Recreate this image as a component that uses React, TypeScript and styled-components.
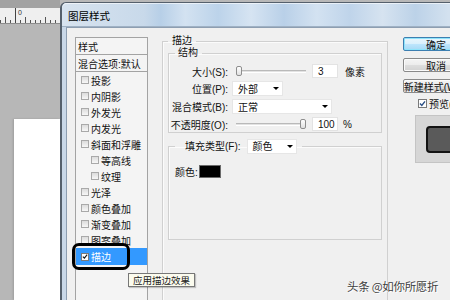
import React from "react";
import styled, { createGlobalStyle } from "styled-components";

const Global = createGlobalStyle`
  html, body { margin: 0; padding: 0; width: 450px; height: 300px; overflow: hidden; background: #b8b8b8; }
  body { font-family: "Liberation Sans", "Noto Sans CJK SC", sans-serif; font-size: 10px; color: #111; }
  * { box-sizing: border-box; }
`;

const Screen = styled.div`
  position: relative;
  display: flex;
  width: 450px;
  height: 300px;
  overflow: hidden;
`;

/* ---------- Photoshop workspace on the left ---------- */
const Workspace = styled.div`
  width: 60px;
  flex: none;
  display: flex;
  flex-direction: column;
  background: #b7b7b7;
`;
const TopStrip = styled.div`
  height: 8px;
  background: #a2a2a2;
`;
const Ruler = styled.div`
  height: 16px;
  padding: 1px 0 0 18px;
  font-size: 7px;
  line-height: 8px;
  color: #333;
  border-bottom: 1px solid #8c8c8c;
  background:
    linear-gradient(#444, #444) 15px 0 / 1px 100% no-repeat,
    repeating-linear-gradient(to right, #555 0 1px, transparent 1px 5px) 0 100% / 100% 3px no-repeat,
    repeating-linear-gradient(to right, #555 0 1px, transparent 1px 20px) 5px 100% / 100% 6px no-repeat,
    #efefef;
`;
const WorkArea = styled.div`
  flex: 1;
  display: flex;
  padding: 95px 0 0 14px;
`;
const Canvas = styled.div`
  flex: 1;
  background: #ffffff;
  box-shadow: -1px 0 2px rgba(0, 0, 0, 0.15);
`;

/* ---------- Dialog ---------- */
const Dialog = styled.div`
  flex: 1;
  margin-top: 2px;
  display: flex;
  flex-direction: column;
  border-left: 2px solid #55606c;
  border-top: 1px solid #55606c;
  border-top-left-radius: 6px;
  background: #c9d8e8;
`;
const TitleBar = styled.div`
  height: 24px;
  flex: none;
  display: flex;
  align-items: center;
  padding-left: 6px;
  font-size: 10.5px;
  color: #000;
  border-top-left-radius: 5px;
  background: linear-gradient(
    to right,
    #d7e3ef 0,
    #c8d9ea 20%,
    #b7cfe7 24%,
    #d3e2f1 30%,
    #bcd3ea 38%,
    #d6e4f2 46%,
    #b9d0e8 54%,
    #d3e2f1 62%,
    #bfd4ea 70%,
    #d6e3f0 78%,
    #bcd2e8 86%,
    #d3e1ef 94%
  );
  box-shadow: inset 0 1px 0 rgba(255, 255, 255, 0.6), inset 0 -1px 0 #9fb1c4;
`;
const Body = styled.div`
  flex: 1;
  min-height: 0;
  overflow: hidden;
  margin-left: 4px;
  display: flex;
  align-items: flex-start;
  padding: 7px 0 0 8px;
  background: #f0f0f0;
  border-left: 1px solid #8d9eb1;
  border-top: 1px solid #8d9eb1;
`;

/* ---------- Styles list ---------- */
const ListBox = styled.div`
  position: relative;
  width: 73px;
  flex: none;
  margin-top: 2px;
  align-self: stretch;
  border: 1px solid #a3a3a3;
  border-bottom: none;
  background: #f4f4f4;
`;
const ListHead = styled.div`
  height: 17px;
  display: flex;
  align-items: center;
  padding-left: 2px;
  border-bottom: 1px solid #a3a3a3;
  white-space: nowrap;
  color: #111;
`;
const ListItem = styled.div<{ $indent?: boolean; $selected?: boolean }>`
  height: ${(p) => (p.$selected ? 17 : 16)}px;
  display: flex;
  align-items: center;
  gap: 2px;
  padding-left: ${(p) => (p.$indent ? 15 : 5)}px;
  white-space: nowrap;
  background: ${(p) => (p.$selected ? "#3399ff" : "transparent")};
  color: ${(p) => (p.$selected ? "#ffffff" : "#111")};
`;
const Box = styled.span<{ $checked?: boolean; $size?: number }>`
  width: ${(p) => p.$size ?? 8}px;
  height: ${(p) => p.$size ?? 8}px;
  flex: none;
  display: inline-flex;
  align-items: center;
  justify-content: center;
  border: 1px solid ${(p) => (p.$checked ? "#7a7a7a" : "#a9a9a9")};
  background: ${(p) => (p.$checked ? "#ffffff" : "linear-gradient(#dcdcdc, #f7f7f7)")};
`;
const Annotation = styled.div`
  position: absolute;
  left: -4px;
  top: 205px;
  width: 58px;
  height: 27px;
  border: 3px solid #000;
  border-radius: 7px;
`;
const Tooltip = styled.div`
  position: absolute;
  left: 128px;
  top: 273px;
  height: 14px;
  padding: 0 4px;
  display: flex;
  align-items: center;
  font-size: 9.5px;
  color: #222;
  background: #fbfbee;
  border: 1px solid #777;
  box-shadow: 1px 1px 1px rgba(0, 0, 0, 0.2);
  white-space: nowrap;
`;

/* ---------- Main panel ---------- */
const Group = styled.fieldset<{ $outer?: boolean }>`
  margin: 0;
  border: 1px solid #d0d0d0;
  box-shadow: inset 1px 1px 0 #fbfbfb;
  padding: ${(p) => (p.$outer ? "0 5px 0 5px" : "0 2px 0 2px")};
  min-width: 0;
`;
const Outer = styled(Group)`
  width: 226px;
  height: 280px;
  flex: none;
  margin-left: 14px;
`;
const Legend = styled.legend<{ $pad?: number }>`
  line-height: 12px;
  padding: 0 4px 0 ${(p) => p.$pad ?? 4}px;
  margin-left: ${(p) => (p.$pad ? 4 : 0)}px;
  color: #111;
`;
const FillLegend = styled(Legend)`
  display: flex;
  align-items: center;
  gap: 6px;
  line-height: 15px;
  padding-right: 5px;
`;
const Structure = styled(Group)`
  padding-bottom: 1px;
`;
const Rows = styled.div`
  display: grid;
  grid-template-columns: 57px 1fr;
  column-gap: 4px;
  row-gap: 3px;
  padding-top: 5px;
`;
const Label = styled.div<{ $h: number }>`
  height: ${(p) => p.$h}px;
  display: flex;
  align-items: center;
  justify-content: flex-end;
  white-space: nowrap;
  color: #111;
`;
const Controls = styled.div<{ $h: number }>`
  height: ${(p) => p.$h}px;
  display: flex;
  align-items: center;
`;
const SliderTrack = styled.div`
  position: relative;
  width: 70px;
  height: 3px;
  margin-left: 4px;
  border-top: 1px solid #b9b9b9;
  border-bottom: 1px solid #ffffff;
  background: #e2e2e2;
`;
const Thumb = styled.span<{ $pos: number }>`
  position: absolute;
  top: -5px;
  left: ${(p) => p.$pos * 64}px;
  width: 6px;
  height: 10px;
  border: 1px solid #8e8e8e;
  border-radius: 2px;
  background: linear-gradient(#ffffff, #e0e0e0);
`;
const NumInput = styled.div`
  width: 26px;
  height: 14px;
  margin-left: 6px;
  padding-left: 5px;
  display: flex;
  align-items: center;
  background: #fff;
  border: 1px solid #e3e3e3;
  color: #111;
`;
const Unit = styled.span<{ $gap: number }>`
  margin-left: ${(p) => p.$gap}px;
  color: #111;
  white-space: nowrap;
`;
const Select = styled.div<{ $w: number }>`
  width: ${(p) => p.$w}px;
  height: 15px;
  display: flex;
  align-items: center;
  justify-content: space-between;
  padding: 0 3px 0 5px;
  background: #fff;
  border: 1px solid #e6e6e6;
  color: #111;
`;
const Arrow = styled.span`
  width: 0;
  height: 0;
  border-left: 3px solid transparent;
  border-right: 3px solid transparent;
  border-top: 3px solid #000;
`;
const Fill = styled(Group)`
  margin-top: 6px;
  height: 101px;
`;
const ColorRow = styled.div`
  display: flex;
  align-items: center;
  gap: 1px;
  padding: 10px 0 0 4px;
  color: #111;
`;
const Swatch = styled.span`
  width: 22px;
  height: 13px;
  background: #000;
  border: 1px solid #6a6a6a;
`;

/* ---------- Right column ---------- */
const RightCol = styled.div`
  flex: none;
  width: 70px;
  margin: 2px 0 0 15px;
  display: flex;
  flex-direction: column;
  gap: 7px;
`;
const Button = styled.div<{ $default?: boolean }>`
  width: 66px;
  height: 14px;
  display: flex;
  align-items: center;
  justify-content: center;
  white-space: nowrap;
  color: #111;
  border-radius: 2px;
  border: 1px solid ${(p) => (p.$default ? "#3c7fb1" : "#8a8a8a")};
  background: ${(p) =>
    p.$default
      ? "linear-gradient(#eaf6fd, #d9f0fc 50%, #bee6fd 50%, #a7d9f5)"
      : "linear-gradient(#f4f4f4, #ececec 50%, #dedede 50%, #d2d2d2)"};
  box-shadow: ${(p) => (p.$default ? "inset 0 0 0 1px #8fe4fb" : "inset 0 0 0 1px #fbfbfb")};
`;
const PreviewCheck = styled.div`
  display: flex;
  align-items: center;
  gap: 2px;
  padding-left: 15px;
  margin-top: -2px;
  height: 10px;
  white-space: nowrap;
  color: #111;
`;
const PreviewBox = styled.div`
  margin: 0 0 0 12px;
  width: 60px;
  height: 48px;
  padding: 10px 0 0 10px;
  background: #d6d6d6;
  border: 1px solid #c4c4c4;
`;
const PreviewSwatch = styled.div`
  width: 50px;
  height: 27px;
  background: #5a5a5a;
  border: 2px solid #121212;
  border-radius: 4px;
`;

const Watermark = styled.div`
  position: absolute;
  left: 347px;
  top: 278px;
  font-family: "Noto Sans CJK SC", sans-serif;
  font-size: 11.5px;
  letter-spacing: -0.3px;
  color: #3c3c3c;
  text-shadow: 0 0 1px #fff, 0 0 1px #fff, 1px 1px 0 #fff;
  white-space: nowrap;
`;

const Check = ({ color = "#222" }: { color?: string }) => (
  <svg width="7" height="7" viewBox="0 0 7 7">
    <path d="M1 3.6 L2.8 5.4 L6 1.4" fill="none" stroke={color} strokeWidth="1.4" />
  </svg>
);

const CheckBox = ({ checked, size, color }: { checked?: boolean; size?: number; color?: string }) => (
  <Box $checked={checked} $size={size}>
    {checked && <Check color={color} />}
  </Box>
);

const items: { label: string; indent?: boolean }[] = [
  { label: "投影" },
  { label: "内阴影" },
  { label: "外发光" },
  { label: "内发光" },
  { label: "斜面和浮雕" },
  { label: "等高线", indent: true },
  { label: "纹理", indent: true },
  { label: "光泽" },
  { label: "颜色叠加" },
  { label: "渐变叠加" },
  { label: "图案叠加" },
];

export default function App() {
  return (
    <Screen>
      <Global />
      <Workspace>
        <TopStrip />
        <Ruler>0</Ruler>
        <WorkArea>
          <Canvas />
        </WorkArea>
      </Workspace>

      <Dialog>
        <TitleBar>图层样式</TitleBar>
        <Body>
          <ListBox>
            <ListHead>样式</ListHead>
            <ListHead>混合选项:默认</ListHead>
            {items.map((it) => (
              <ListItem key={it.label} $indent={it.indent}>
                <CheckBox />
                <span>{it.label}</span>
              </ListItem>
            ))}
            <ListItem $selected>
              <CheckBox checked color="#1a1a1a" />
              <span>描边</span>
            </ListItem>
            <Annotation />
          </ListBox>

          <Outer as="fieldset" $outer>
            <Legend>描边</Legend>
            <Structure>
              <Legend $pad={3}>结构</Legend>
              <Rows>
                <Label $h={14}>大小(S):</Label>
                <Controls $h={14}>
                  <SliderTrack>
                    <Thumb $pos={0} />
                  </SliderTrack>
                  <NumInput>3</NumInput>
                  <Unit $gap={7}>像素</Unit>
                </Controls>

                <Label $h={15}>位置(P):</Label>
                <Controls $h={15}>
                  <Select $w={51}>
                    <span>外部</span>
                    <Arrow />
                  </Select>
                </Controls>

                <Label $h={15}>混合模式(B):</Label>
                <Controls $h={15}>
                  <Select $w={100}>
                    <span>正常</span>
                    <Arrow />
                  </Select>
                </Controls>

                <Label $h={14}>不透明度(O):</Label>
                <Controls $h={14}>
                  <SliderTrack>
                    <Thumb $pos={1} />
                  </SliderTrack>
                  <NumInput>100</NumInput>
                  <Unit $gap={5}>%</Unit>
                </Controls>
              </Rows>
            </Structure>

            <Fill>
              <FillLegend $pad={10}>
                <span>填充类型(F):</span>
                <Select $w={50}>
                  <span>颜色</span>
                  <Arrow />
                </Select>
              </FillLegend>
              <ColorRow>
                <span>颜色:</span>
                <Swatch />
              </ColorRow>
            </Fill>
          </Outer>

          <RightCol>
            <Button $default>确定</Button>
            <Button>取消</Button>
            <Button>新建样式(W)...</Button>
            <PreviewCheck>
              <CheckBox checked size={9} color="#2a4f86" />
              <span>预览(V)</span>
            </PreviewCheck>
            <PreviewBox>
              <PreviewSwatch />
            </PreviewBox>
          </RightCol>
        </Body>
      </Dialog>

      <Tooltip>应用描边效果</Tooltip>
      <Watermark>头条 @如你所愿折</Watermark>
    </Screen>
  );
}
